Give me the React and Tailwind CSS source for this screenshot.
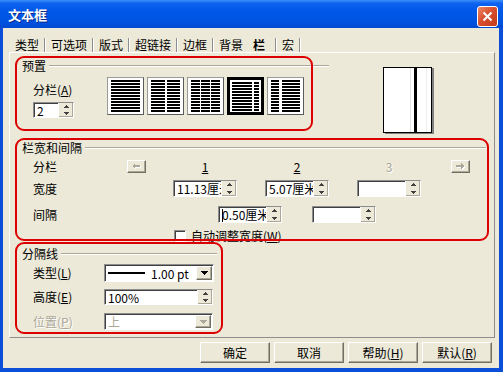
import React from "react";

const F = "font-['Noto_Sans_CJK_SC',sans-serif]";

function Sunken({ className = "", children }) {
  return (
    <div
      className={`flex bg-white border border-t-[#8d8d8d] border-l-[#8d8d8d] border-r-white border-b-white shadow-[inset_1px_1px_0_#404040] ${className}`}
    >
      {children}
    </div>
  );
}

function SpinBtns({ disabled }) {
  const c = disabled ? "#aca899" : "#404040";
  return (
    <div className="w-[15px] shrink-0 self-stretch flex flex-col bg-[#ece9d8] border-l border-l-white shadow-[inset_-1px_-1px_0_#aca899]">
      <div className="flex-1 flex items-center justify-center">
        <svg width="5" height="3" shapeRendering="crispEdges">
          <path d="M0 3 L2.5 0 L5 3Z" fill={c} />
        </svg>
      </div>
      <div className="flex-1 flex items-center justify-center">
        <svg width="5" height="3" shapeRendering="crispEdges">
          <path d="M0 0 L2.5 3 L5 0Z" fill={c} />
        </svg>
      </div>
    </div>
  );
}

function Spin({ className = "", children }) {
  return (
    <Sunken className={`items-stretch ${className}`}>
      <div className="flex-1 min-w-0 overflow-hidden whitespace-nowrap flex items-center pl-[3px] pt-[1px]">
        {children}
      </div>
      <SpinBtns />
    </Sunken>
  );
}

function Raised({ className = "", children }) {
  return (
    <div
      className={`flex items-center justify-center bg-[#ece9d8] border border-t-white border-l-white border-r-[#716f64] border-b-[#716f64] shadow-[inset_-1px_-1px_0_#aca899] ${className}`}
    >
      {children}
    </div>
  );
}

function Sep() {
  return <div className="w-[2px] h-[14px] border-l border-l-[#8d8d8d] border-r border-r-white" />;
}

function Tab({ children, bold }) {
  return (
    <span className={`h-[14px] leading-[14px] whitespace-nowrap ${bold ? "font-bold mx-[5px]" : ""}`}>
      {children}
    </span>
  );
}

function Header({ label, className = "", lineClass = "" }) {
  return (
    <div className={`h-[12px] flex items-center ${className}`}>
      <span className="ml-[12px] leading-[12px] whitespace-nowrap">{label}</span>
      <div className={`flex-1 ml-[3px] border-t border-t-[#aca899] border-b border-b-white ${lineClass}`} />
    </div>
  );
}

function Preset({ cols, selected, w = 29, h = 32 }) {
  const n = Math.floor((h + 1) / 3);
  const lines = Array.from({ length: n }, (_, i) => i);
  return (
    <div
      className={`w-[37px] h-[38px] bg-white flex items-center justify-center ${
        selected
          ? "border-[3px] border-black"
          : "border border-t-[#9a9a9a] border-l-[#9a9a9a] border-r-[#5a5a5a] border-b-[#5a5a5a]"
      }`}
    >
      <svg width={w} height={h} shapeRendering="crispEdges">
        {cols.map(([a, b], ci) =>
          lines.map((i) => (
            <rect key={ci + "-" + i} x={a} y={i * 3} width={b - a} height={2} fill="#000" />
          ))
        )}
      </svg>
    </div>
  );
}

function ArrowBtn({ dir }) {
  return (
    <Raised className="w-[19px] h-[13px]">
      <svg width="9" height="7" shapeRendering="crispEdges">
        {dir === "left" ? (
          <g>
            <path d="M1 4 L4 1 L4 7 Z" fill="#fff" />
            <rect x="4" y="3" width="5" height="2" fill="#fff" />
            <path d="M0 3 L3 0 L3 6 Z" fill="#aca899" />
            <rect x="3" y="2" width="5" height="2" fill="#aca899" />
          </g>
        ) : (
          <g>
            <path d="M9 4 L6 1 L6 7 Z" fill="#fff" />
            <rect x="1" y="3" width="5" height="2" fill="#fff" />
            <path d="M8 3 L5 0 L5 6 Z" fill="#aca899" />
            <rect x="0" y="2" width="5" height="2" fill="#aca899" />
          </g>
        )}
      </svg>
    </Raised>
  );
}

const dis = "text-[#aca899] [text-shadow:1px_1px_0_#fff]";

export default function App() {
  return (
    <div
      className={`relative w-[503px] h-[372px] bg-[#0b4fd8] flex flex-col overflow-hidden text-[12px] leading-[12px] text-black ${F}`}
    >
      {/* Title bar */}
      <div className="h-[28px] shrink-0 flex items-center justify-between pl-[8px] pr-[5px] bg-[linear-gradient(to_bottom,#3d8ff9_0%,#0d62f0_12%,#0058e8_40%,#0052e0_80%,#0049d2_100%)]">
        <span className="text-white font-bold text-[13px] leading-[13px] [text-shadow:1px_1px_0_#0a2a8a]">
          文本框
        </span>
        <div className="w-[21px] h-[21px] mt-[4px] rounded-[3px] border border-white bg-[linear-gradient(135deg,#ec8a66_0%,#d9502f_45%,#c23a1a_100%)] flex items-center justify-center">
          <svg width="11" height="11">
            <path d="M1.5 1.5 L9.5 9.5 M9.5 1.5 L1.5 9.5" stroke="white" strokeWidth="2" />
          </svg>
        </div>
      </div>

      {/* Body */}
      <div className="flex-1 ml-[3px] mr-[4px] mb-[4px] bg-[#ece9d8] flex flex-col">
        {/* Tabs */}
        <div className="h-[24px] shrink-0 flex items-start pt-[10px] pl-[12px] gap-[5px]">
          <Tab>类型</Tab>
          <Sep />
          <Tab>可选项</Tab>
          <Sep />
          <Tab>版式</Tab>
          <Sep />
          <Tab>超链接</Tab>
          <Sep />
          <Tab>边框</Tab>
          <Sep />
          <Tab>背景</Tab>
          <Tab bold>栏</Tab>
          <Sep />
          <Tab>宏</Tab>
          <Sep />
        </div>

        {/* Panel */}
        <div className="ml-[6px] w-[486px] h-[286px] shrink-0 border border-t-white border-l-white border-r-[#8d8d8d] border-b-[#8d8d8d] flex flex-col">
          {/* Section 1 */}
          <div className="h-[89px] shrink-0 flex">
            <div className="w-[319px] flex flex-col">
              <Header label="预置" className="mt-[7px]" />
              <div className="mt-[5px] flex">
                <div className="ml-[23px] w-[74px] flex flex-col">
                  <span className="mt-[7px] leading-[12px]">
                    分栏(<u>A</u>)
                  </span>
                  <Spin className="mt-[6px] w-[41px] h-[16px]">2</Spin>
                </div>
                <div className="flex gap-[3px]">
                  <Preset cols={[[0, 29]]} />
                  <Preset cols={[[0, 14], [16, 29]]} />
                  <Preset cols={[[0, 9], [10, 19], [20, 29]]} />
                  <Preset cols={[[0, 20], [22, 27]]} selected w={27} h={29} />
                  <Preset cols={[[0, 8], [11, 29]]} />
                </div>
              </div>
            </div>
            <div className="ml-[54px] mt-[14px] w-[49px] h-[66px] bg-white border border-black shadow-[2px_1px_0_#808080] flex">
              <div className="ml-[26px] w-[1px] bg-[#e6e6e6]" />
              <div className="ml-[3px] w-[3px] bg-black" />
              <div className="ml-[9px] w-[1px] bg-[#eeeeee]" />
            </div>
          </div>

          {/* Section 2 */}
          <Header label="栏宽和间隔" className="mr-[8px]" />
          <div className="mt-[6px] h-[13px] flex items-center">
            <span className="ml-[23px] w-[94px]">分栏</span>
            <ArrowBtn dir="left" />
            <div className="ml-[27px] w-[64px] text-center">
              <u>1</u>
            </div>
            <div className="ml-[28px] w-[64px] text-center">
              <u>2</u>
            </div>
            <div className={`ml-[28px] w-[64px] text-center ${dis}`}>3</div>
            <div className="ml-[30px]">
              <ArrowBtn dir="right" />
            </div>
          </div>
          <div className="mt-[7px] h-[17px] flex items-center">
            <span className="ml-[23px] w-[140px]">宽度</span>
            <Spin className="w-[64px] h-[17px]">11.13厘米</Spin>
            <Spin className="ml-[28px] w-[64px] h-[17px]">5.07厘米</Spin>
            <Spin className="ml-[28px] w-[64px] h-[17px]"></Spin>
          </div>
          <div className="mt-[9px] h-[17px] flex items-center">
            <span className="ml-[23px] w-[185px]">间隔</span>
            <Spin className="w-[64px] h-[17px]">
              <span className="w-[1px] h-[13px] bg-black mr-[-1px] shrink-0" />
              0.50厘米
            </Spin>
            <Spin className="ml-[30px] w-[64px] h-[17px]"></Spin>
          </div>
          <div className="mt-[6px] h-[13px] flex items-center">
            <Sunken className="ml-[164px] w-[12px] h-[12px]" />
            <span className="ml-[5px] whitespace-nowrap">
              自动调整宽度(<u>W</u>)
            </span>
          </div>

          {/* Section 3 */}
          <Header label="分隔线" className="mt-[6px] w-[207px]" />
          <div className="mt-[4px] h-[18px] flex items-center">
            <span className="ml-[23px] w-[71px] whitespace-nowrap">
              类型(<u>L</u>)
            </span>
            <Sunken className="w-[110px] h-[18px] items-center">
              <div className="flex-1 flex items-center pl-[3px]">
                <div className="w-[37px] h-[2px] bg-black" />
                <span className="ml-[6px] pt-[1px] whitespace-nowrap">1.00 pt</span>
              </div>
              <Raised className="w-[16px] h-[14px] mr-[1px]">
                <svg width="7" height="4" shapeRendering="crispEdges">
                  <path d="M0 0 L7 0 L3.5 4Z" fill="#000" />
                </svg>
              </Raised>
            </Sunken>
          </div>
          <div className="mt-[7px] h-[16px] flex items-center">
            <span className="ml-[23px] w-[71px] whitespace-nowrap">
              高度(<u>E</u>)
            </span>
            <Spin className="w-[109px] h-[16px]">100%</Spin>
          </div>
          <div className="mt-[8px] h-[17px] flex items-center">
            <span className={`ml-[23px] w-[71px] whitespace-nowrap ${dis}`}>
              位置(<u>P</u>)
            </span>
            <Sunken className="w-[109px] h-[17px] items-center">
              <div className={`flex-1 pl-[3px] pt-[1px] ${dis}`}>上</div>
              <Raised className="w-[16px] h-[13px] mr-[1px]">
                <svg width="7" height="4" shapeRendering="crispEdges">
                  <path d="M0 0 L7 0 L3.5 4Z" fill="#aca899" />
                </svg>
              </Raised>
            </Sunken>
          </div>
        </div>

        {/* Buttons */}
        <div className="mt-[4px] ml-[197px] flex gap-[4px]">
          <Raised className="w-[70px] h-[21px]">确定</Raised>
          <Raised className="w-[70px] h-[21px]">取消</Raised>
          <Raised className="w-[70px] h-[21px]">
            帮助(<u>H</u>)
          </Raised>
          <Raised className="w-[70px] h-[21px]">
            默认(<u>R</u>)
          </Raised>
        </div>
      </div>

      {/* Red annotation outlines */}
      <div className="absolute left-[15px] top-[56px] w-[298px] h-[75px] border-2 border-[#dd0000] rounded-[9px] pointer-events-none" />
      <div className="absolute left-[15px] top-[138px] w-[474px] h-[103px] border-2 border-[#dd0000] rounded-[9px] pointer-events-none" />
      <div className="absolute left-[15px] top-[242px] w-[208px] h-[92px] border-2 border-[#dd0000] rounded-[9px] pointer-events-none" />
    </div>
  );
}
